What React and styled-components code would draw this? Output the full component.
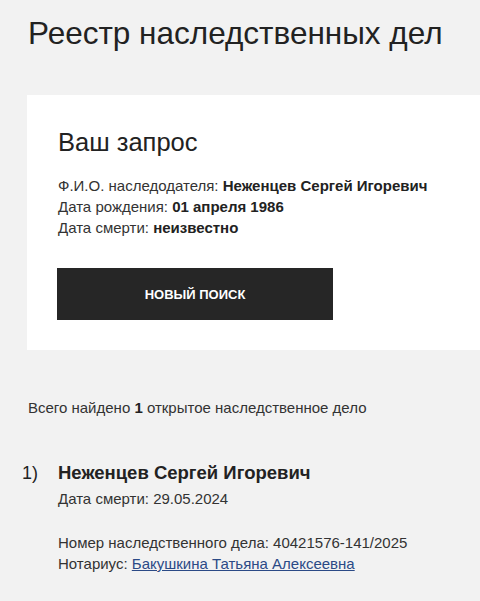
import React from "react";
import styled, { createGlobalStyle } from "styled-components";

const Global = createGlobalStyle`
  html, body { margin: 0; padding: 0; background: #f2f2f2; }
  body { font-family: "Liberation Sans", Arial, sans-serif; color: #222; overflow: hidden; }
`;

const Page = styled.div`
  width: 480px;
  height: 601px;
  padding: 14px 0 0 28px;
  box-sizing: border-box;
  overflow: hidden;
`;

const Title = styled.h1`
  margin: 0;
  font-size: 31.5px;
  font-weight: 400;
  line-height: 38px;
  color: #222;
`;

const Card = styled.section`
  margin: 43px 0 0 -1px;
  width: 500px;
  background: #fff;
  padding: 33px 0 30px 31px;
  box-sizing: border-box;
  height: 255px;
`;

const CardTitle = styled.h2`
  margin: 0;
  font-size: 25.5px;
  font-weight: 400;
  line-height: 28px;
  color: #222;
`;

const Info = styled.div`
  margin-top: 19px;
  font-size: 15px;
  line-height: 21px;
  color: #333;
`;

const Strong = styled.b`
  font-weight: 700;
  color: #222;
`;

const Button = styled.button`
  margin-top: 30px;
  margin-left: -1px;
  width: 276px;
  height: 52px;
  border: 0;
  background: #262626;
  color: #fff;
  font-family: "Liberation Sans", Arial, sans-serif;
  font-weight: 700;
  font-size: 13px;
  cursor: pointer;
`;

const Summary = styled.p`
  margin: 49px 0 0;
  font-size: 15px;
  line-height: 18px;
  color: #333;
`;

const Item = styled.div`
  margin-top: 44px;
  margin-left: -6px;
  display: grid;
  grid-template-columns: 36px 1fr;
`;

const Num = styled.div`
  font-size: 18px;
  line-height: 24px;
  color: #222;
`;

const ItemBody = styled.div`
  display: flex;
  flex-direction: column;
`;

const Name = styled.div`
  font-size: 18.5px;
  font-weight: 700;
  line-height: 24px;
  color: #222;
`;

const Line = styled.div`
  font-size: 15px;
  line-height: 21px;
  color: #333;
  margin-top: ${(p) => p.$mt || 0}px;
`;

const Link = styled.a`
  color: #2b4a86;
  text-decoration: underline;
`;

export default function App() {
  return (
    <>
      <Global />
      <Page>
        <Title>Реестр наследственных дел</Title>
        <Card>
          <CardTitle>Ваш запрос</CardTitle>
          <Info>
            <div>
              Ф.И.О. наследодателя: <Strong>Неженцев Сергей Игоревич</Strong>
            </div>
            <div>
              Дата рождения: <Strong>01 апреля 1986</Strong>
            </div>
            <div>
              Дата смерти: <Strong>неизвестно</Strong>
            </div>
          </Info>
          <Button>НОВЫЙ ПОИСК</Button>
        </Card>
        <Summary>
          Всего найдено <Strong>1</Strong> открытое наследственное дело
        </Summary>
        <Item>
          <Num>1)</Num>
          <ItemBody>
            <Name>Неженцев Сергей Игоревич</Name>
            <Line $mt={3}>Дата смерти: 29.05.2024</Line>
            <Line $mt={23}>Номер наследственного дела: 40421576-141/2025</Line>
            <Line>
              Нотариус: <Link href="#">Бакушкина Татьяна Алексеевна</Link>
            </Line>
          </ItemBody>
        </Item>
      </Page>
    </>
  );
}
